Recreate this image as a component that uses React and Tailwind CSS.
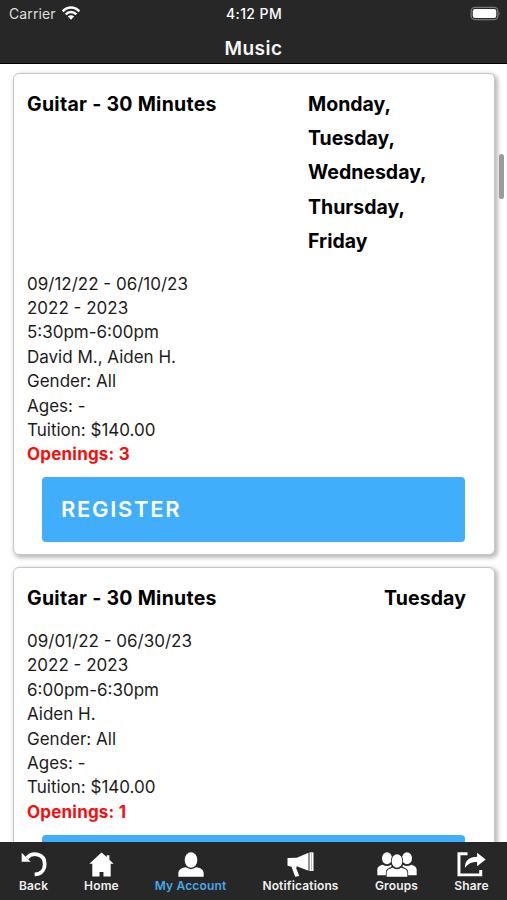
const classes = [
  {
    id: 1,
    name: "Guitar - 30 Minutes",
    days: ["Monday,", "Tuesday,", "Wednesday,", "Thursday,", "Friday"],
    dates: "09/12/22 - 06/10/23",
    session: "2022 - 2023",
    time: "5:30pm-6:00pm",
    staff: "David M., Aiden H.",
    openings: 3,
  },
  {
    id: 2,
    name: "Guitar - 30 Minutes",
    days: ["Tuesday"],
    dates: "09/01/22 - 06/30/23",
    session: "2022 - 2023",
    time: "6:00pm-6:30pm",
    staff: "Aiden H.",
    openings: 1,
  },
];

function StatusBar() {
  return (
    <div className="flex h-7 items-center justify-between pl-[9px] pr-2 text-white">
      <div className="flex w-32 items-center gap-[6px]">
        <span className="mt-[-2px] text-[14px] tracking-[0.1px] text-[#dedede]">Carrier</span>
        <svg viewBox="0 0 54 42" className="mt-[-2px] h-[14px] w-[18px]" fill="none" stroke="white" strokeWidth="7.5">
          <path d="M2 16C16 1 38 1 52 16" />
          <path d="M11 25C20 16 34 16 43 25" />
          <path d="M27 41L17.500 31.500C23 26 31 26 36.500 31.500Z" fill="white" stroke="none" />
        </svg>
      </div>
      <span className="mt-[-2px] text-[14px] font-medium tracking-[0.4px]">4:12 PM</span>
      <div className="flex w-32 justify-end">
        <svg viewBox="0 0 92 46" className="mt-[-2px] mr-[-2px] h-[15px] w-[31px]">
          <rect x="2" y="4" width="82" height="38" rx="12" fill="#292929" stroke="#777" strokeWidth="4" />
          <rect x="7" y="9" width="72" height="28" rx="7" fill="white" />
          <path d="M87 17Q92 23 87 29Z" fill="#888" />
        </svg>
      </div>
    </div>
  );
}

function ClassCard({ item }) {
  return (
    <div className="rounded-[6px] border border-[#c8c8c8] bg-white px-[13px] pt-[13px] pb-3 shadow-[2px_2px_4px_1px_rgba(0,0,0,0.27)]">
      <div className="flex justify-between text-[19.5px] leading-[34.2px] font-bold text-black">
        <h2 className="tracking-[0.28px]">{item.name}</h2>
        <div className={item.days.length > 1 ? "w-[173px]" : "pr-[15px] tracking-[0.1px]"}>
          {item.days.map((day) => (
            <div key={day}>{day}</div>
          ))}
        </div>
      </div>
      <div className="mt-[13.5px] text-[17px] leading-[24.4px] text-[#1c1c1c]">
        <p>{item.dates}</p>
        <p>{item.session}</p>
        <p>{item.time}</p>
        <p>{item.staff}</p>
        <p>Gender: All</p>
        <p>Ages: -</p>
        <p>Tuition: $140.00</p>
        <p className="font-bold tracking-[0.2px] text-[#f80d0d]">Openings: {item.openings}</p>
      </div>
      <button className="mt-[10.5px] ml-[15px] flex h-[65px] w-[423px] items-center rounded-[4px] bg-[#41aefb] pl-[19px] text-[22px] font-semibold tracking-[1.7px] text-white">
        REGISTER
      </button>
    </div>
  );
}

function BackIcon() {
  return (
    <svg viewBox="0 0 78 75" className="h-[25px] w-[26px]">
      <path d="M18 18C34-1 71 4 71 36C71 56 58 67 41 67" fill="none" stroke="white" strokeWidth="11" />
      <path d="M2 2V29H29Z" fill="white" />
    </svg>
  );
}

function HomeIcon() {
  return (
    <svg viewBox="0 0 76 75" className="h-[25px] w-[25px]" fill="white">
      <path d="M38 1L1 35H10V74H32V60H44V74H66V35H75L62 23V9H54V15Z" />
    </svg>
  );
}

function AccountIcon() {
  return (
    <svg viewBox="0 0 78 75" className="h-[25px] w-[26px]" fill="white">
      <ellipse cx="39" cy="24" rx="19" ry="23" />
      <path d="M1 74V64C1 53 13 47 24 46Q39 57 54 46C66 47 77 53 77 64V74Z" />
    </svg>
  );
}

function MegaphoneIcon() {
  return (
    <svg viewBox="0 0 80 75" className="h-[25px] w-[27px]" fill="white">
      <path d="M1 18L29 17L64 2V56L29 43L27 48L36 72L24 74L13 44L1 41Z" />
      <rect x="67" y="1" width="12" height="56" />
      <path d="M73 3V55" stroke="#292929" strokeWidth="1" />
    </svg>
  );
}

function GroupsIcon() {
  return (
    <svg viewBox="0 0 120 75" className="h-[25px] w-[40px]" fill="white">
      <ellipse cx="30" cy="19" rx="15" ry="18" />
      <ellipse cx="90" cy="19" rx="15" ry="18" />
      <path d="M1 70V53C1 44 9 40 17 38Q30 46 43 38V70Z" />
      <path d="M119 70V53C119 44 111 40 103 38Q90 46 77 38V70Z" />
      <g stroke="#292929" strokeWidth="5" paintOrder="stroke">
        <path d="M29 74V61C29 53 38 49 48 47Q60 57 72 47C82 49 91 53 91 61V74Z" />
        <ellipse cx="60" cy="27" rx="16" ry="20" />
      </g>
    </svg>
  );
}

function ShareIcon() {
  return (
    <svg viewBox="0 0 88 75" className="h-[25px] w-[29px]">
      <path d="M32 5H6V69H72V54" fill="none" stroke="white" strokeWidth="9" />
      <path d="M24 48C24 24 38 14 61 14V2L87 22L61 43V30C43 30 34 35 24 48Z" fill="white" />
    </svg>
  );
}

const tabs = [
  { label: "Back", icon: BackIcon, width: "w-[29px]" },
  { label: "Home", icon: HomeIcon, width: "w-[35px]" },
  { label: "My Account", icon: AccountIcon, width: "w-[71px]", active: true },
  { label: "Notifications", icon: MegaphoneIcon, width: "w-[77px]" },
  { label: "Groups", icon: GroupsIcon, width: "w-[43px]" },
  { label: "Share", icon: ShareIcon, width: "w-[35px]" },
];

function TabBar() {
  return (
    <nav className="flex h-[58px] shrink-0 justify-between bg-[#272727] pt-[10px] pr-[18px] pl-[19px]">
      {tabs.map(({ label, icon: Icon, width, active }) => (
        <button key={label} className={`flex flex-col items-center ${width}`}>
          <span className="flex h-[25px] justify-center">
            <Icon />
          </span>
          <span
            className={`text-[12px] leading-[18px] font-semibold tracking-[0.15px] whitespace-nowrap ${
              active ? "text-[#45a9e8]" : "text-[#f0f0f0]"
            }`}
          >
            {label}
          </span>
        </button>
      ))}
    </nav>
  );
}

export default function App() {
  return (
    <div className="flex h-[900px] w-[507px] flex-col overflow-hidden bg-white font-['Inter','Liberation_Sans',sans-serif]">
      <header className="h-16 shrink-0 border-b border-black bg-[#272727]">
        <StatusBar />
        <h1 className="pt-[7px] text-center text-[19px] leading-[28px] font-semibold tracking-[0.5px] text-[#f5f5f5]">
          Music
        </h1>
      </header>
      <main className="relative flex min-h-0 flex-1 flex-col gap-3 overflow-hidden pt-[9px] pr-3 pl-[13px]">
        {classes.map((item) => (
          <ClassCard key={item.id} item={item} />
        ))}
        <div className="absolute top-[90px] right-[3px] h-[45px] w-[5px] rounded-full bg-[#9b9b9b]" />
      </main>
      <TabBar />
    </div>
  );
}
